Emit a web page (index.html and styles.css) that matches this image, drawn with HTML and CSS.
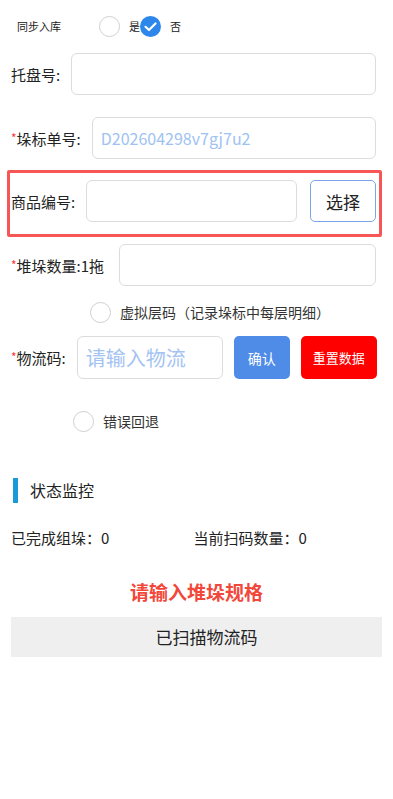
FILE: index.html
```html
<!doctype html>
<html>
<head>
    <meta charset="utf-8">
    <title>组垛</title>
    <meta name="viewport" content="width=device-width, initial-scale=1" />
    <link rel="stylesheet" href="styles.css">
</head>
<body>
<div class="page">
    <div class="sync-row">
        <span class="sync-label">同步入库</span>
        <span class="radio"></span>
        <span class="sync-opt">是</span>
        <span class="radio checked">
            <svg width="21" height="21" viewBox="0 0 21 21"><path d="M5.5 10.8 L9 14 L15.5 7.5" fill="none" stroke="#fff" stroke-width="2.2" stroke-linecap="round" stroke-linejoin="round"/></svg>
        </span>
        <span class="sync-opt">否</span>
    </div>

    <div class="field row-pallet">
        <label class="label">托盘号:</label>
        <input class="input" type="text">
    </div>

    <div class="field row-tag">
        <label class="label"><i class="req">*</i>垛标单号:</label>
        <input class="input value" type="text" value="D202604298v7gj7u2">
    </div>

    <div class="field goods-box">
        <label class="label">商品编号:</label>
        <input class="input" type="text">
        <button class="btn-select">选择</button>
    </div>

    <div class="field row-count">
        <label class="label wide"><i class="req">*</i>堆垛数量:1拖</label>
        <input class="input" type="text">
    </div>

    <div class="check-row virtual">
        <span class="radio"></span>
        <span class="check-text">虚拟层码（记录垛标中每层明细）</span>
    </div>

    <div class="field row-code">
        <label class="label"><i class="req">*</i>物流码:</label>
        <input class="input code-input" type="text" placeholder="请输入物流">
        <button class="btn btn-ok">确认</button>
        <button class="btn btn-reset">重置数据</button>
    </div>

    <div class="check-row rollback">
        <span class="radio"></span>
        <span class="check-text">错误回退</span>
    </div>

    <div class="section-title">状态监控</div>

    <div class="stats">
        <span class="stat">已完成组垛：0</span>
        <span class="stat">当前扫码数量：0</span>
    </div>

    <div class="notice">请输入堆垛规格</div>

    <div class="scanned">已扫描物流码</div>
</div>
</body>
</html>
```

FILE: styles.css
```css
* { box-sizing: border-box; }

body {
    margin: 0;
    font-family: "Noto Sans CJK SC", "Noto Sans", sans-serif;
    color: #222;
    background: #fff;
}

.page {
    padding: 0 17px 0 11px;
}

.sync-row {
    display: flex;
    align-items: center;
    height: 20px;
    margin-top: 16px;
    font-size: 11px;
}

.sync-label {
    width: 88px;
    padding-left: 6px;
}

.sync-opt {
    margin: 0 9px 0 9px;
}

.radio {
    display: inline-block;
    flex: none;
    width: 21px;
    height: 21px;
    border: 1px solid #d0d0d0;
    border-radius: 50%;
    background: #fff;
}

.radio.checked {
    border: none;
    background: #2d87ea;
    margin-left: -9px;
}

.radio svg { display: block; }

.field {
    display: flex;
    align-items: center;
    height: 42px;
}

.label {
    flex: none;
    font-size: 15px;
    margin-right: 11px;
    white-space: nowrap;
}

.label.wide { margin-right: 15px; }

.req {
    font-style: normal;
    color: #f33;
    font-size: 12px;
    vertical-align: 2px;
}

.input {
    flex: 1;
    min-width: 0;
    height: 42px;
    border: 1px solid #dcdcdc;
    border-radius: 6px;
    padding: 0 8px;
    font-family: inherit;
    font-size: 16px;
    outline: none;
}

.input.value { color: #9ec2f2; }

.row-pallet { margin-top: 17px; }
.row-tag { margin-top: 22px; }

.goods-box {
    height: auto;
    margin: 11px -6px 0 -4px;
    padding: 7px 3px 12px 1px;
    border: 3px solid #f65656;
    border-radius: 2px;
}

.btn-select {
    flex: none;
    width: 66px;
    height: 42px;
    margin-left: 13px;
    border: 1px solid #7ba7ea;
    border-radius: 5px;
    background: #fff;
    font-family: inherit;
    font-size: 17px;
    color: #222;
}

.row-count { margin-top: 7px; }

.check-row {
    display: flex;
    align-items: center;
    height: 20px;
}

.check-text {
    font-size: 14px;
    color: #333;
    margin-left: 9px;
}

.virtual {
    margin-top: 16px;
    padding-left: 79px;
}

.row-code {
    margin-top: 14px;
    height: 43px;
}

.code-input {
    flex: none;
    width: 146px;
    height: 43px;
    font-size: 20px;
}

.code-input::placeholder { color: #a3c3f3; }

.btn {
    flex: none;
    height: 43px;
    border: none;
    border-radius: 5px;
    color: #fff;
    font-family: inherit;
    font-size: 14px;
}

.btn-ok {
    width: 56px;
    margin-left: 11px;
    background: #4e8ce8;
}

.btn-reset {
    width: 76px;
    margin-left: 11px;
    background: #ff0000;
    font-size: 13px;
}

.rollback {
    margin-top: 32px;
    padding-left: 62px;
}

.section-title {
    margin-top: 47px;
    margin-left: 2px;
    height: 25px;
    line-height: 25px;
    padding-left: 12px;
    border-left: 5px solid #1a9ad8;
    font-size: 16px;
}

.stats {
    display: flex;
    margin-top: 25px;
    font-size: 15px;
    line-height: 20px;
}

.stat { width: 186px; }

.notice {
    margin-top: 32px;
    text-align: center;
    font-size: 19px;
    font-weight: bold;
    line-height: 24px;
    color: #f2483b;
    padding-left: 6px;
}

.scanned {
    margin: 13px -6px 0 0;
    height: 40px;
    line-height: 40px;
    padding-left: 20px;
    background: #efefef;
    text-align: center;
    font-size: 17px;
}
```
